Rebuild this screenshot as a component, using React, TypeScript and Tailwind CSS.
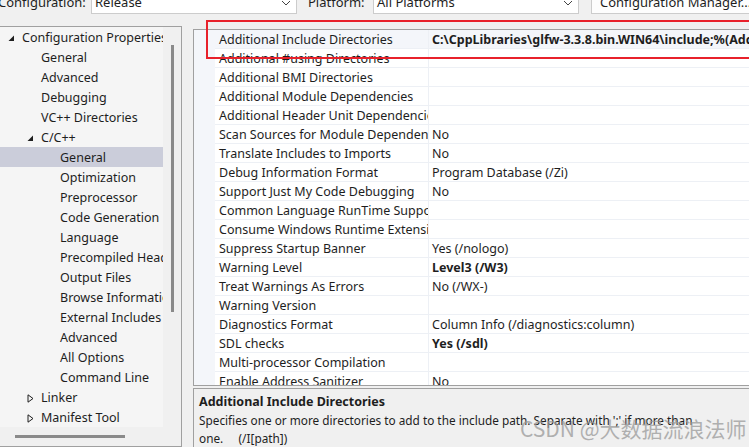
import React from 'react';

const FONT = { fontFamily: '"Noto Sans", "Noto Sans CJK SC", sans-serif' };

type TreeItem = { label: string; level: number; toggle?: 'open' | 'closed'; selected?: boolean };

const tree: TreeItem[] = [
  { label: 'Configuration Properties', level: 0, toggle: 'open' },
  { label: 'General', level: 1 },
  { label: 'Advanced', level: 1 },
  { label: 'Debugging', level: 1 },
  { label: 'VC++ Directories', level: 1 },
  { label: 'C/C++', level: 1, toggle: 'open' },
  { label: 'General', level: 2, selected: true },
  { label: 'Optimization', level: 2 },
  { label: 'Preprocessor', level: 2 },
  { label: 'Code Generation', level: 2 },
  { label: 'Language', level: 2 },
  { label: 'Precompiled Headers', level: 2 },
  { label: 'Output Files', level: 2 },
  { label: 'Browse Information', level: 2 },
  { label: 'External Includes', level: 2 },
  { label: 'Advanced', level: 2 },
  { label: 'All Options', level: 2 },
  { label: 'Command Line', level: 2 },
  { label: 'Linker', level: 1, toggle: 'closed' },
  { label: 'Manifest Tool', level: 1, toggle: 'closed' },
  { label: 'XML Document Generator', level: 1, toggle: 'closed' },
];

type Prop = { name: string; value?: string; bold?: boolean };

const props: Prop[] = [
  { name: 'Additional Include Directories', value: 'C:\\CppLibraries\\glfw-3.3.8.bin.WIN64\\include;%(AdditionalIncludeDirectories)', bold: true },
  { name: 'Additional #using Directories' },
  { name: 'Additional BMI Directories' },
  { name: 'Additional Module Dependencies' },
  { name: 'Additional Header Unit Dependencies' },
  { name: 'Scan Sources for Module Dependencies', value: 'No' },
  { name: 'Translate Includes to Imports', value: 'No' },
  { name: 'Debug Information Format', value: 'Program Database (/Zi)' },
  { name: 'Support Just My Code Debugging', value: 'No' },
  { name: 'Common Language RunTime Support' },
  { name: 'Consume Windows Runtime Extension' },
  { name: 'Suppress Startup Banner', value: 'Yes (/nologo)' },
  { name: 'Warning Level', value: 'Level3 (/W3)', bold: true },
  { name: 'Treat Warnings As Errors', value: 'No (/WX-)' },
  { name: 'Warning Version' },
  { name: 'Diagnostics Format', value: 'Column Info (/diagnostics:column)' },
  { name: 'SDL checks', value: 'Yes (/sdl)', bold: true },
  { name: 'Multi-processor Compilation' },
  { name: 'Enable Address Sanitizer', value: 'No' },
  { name: 'Enable Fuzzer Support', value: 'No' },
];

function Toggle({ kind }: { kind: 'open' | 'closed' }) {
  if (kind === 'open') {
    return (
      <svg width="7" height="7" viewBox="0 0 7 7">
        <polygon points="6,0.5 6,6 0.5,6" fill="#1e1e1e" />
      </svg>
    );
  }
  return (
    <svg width="7" height="9" viewBox="0 0 7 9">
      <polygon points="1,0.8 6,4.5 1,8.2" fill="none" stroke="#1e1e1e" strokeWidth="1" />
    </svg>
  );
}

function Chevron() {
  return (
    <svg width="10" height="6" viewBox="0 0 10 6">
      <polyline points="1,1 5,5 9,1" fill="none" stroke="#444" strokeWidth="1" />
    </svg>
  );
}

export default function App() {
  return (
    <div
      className="relative w-[749px] h-[447px] overflow-hidden bg-[#f0f0f0] text-[12px] text-[#1e1e1e]"
      style={FONT}
    >
      {/* Top bar */}
      <div className="flex items-center h-[22px] mt-[-8px] text-[13px]">
        <span className="ml-[-2px] w-[93px] shrink-0">Configuration:</span>
        <div className="flex items-center justify-between w-[206px] h-[22px] shrink-0 border border-[#cccccc] bg-white pl-[3px] pr-[5px]">
          <span>Release</span>
          <Chevron />
        </div>
        <span className="ml-[11px] w-[65px] shrink-0">Platform:</span>
        <div className="flex items-center justify-between w-[206px] h-[22px] shrink-0 border border-[#cccccc] bg-white pl-[3px] pr-[5px]">
          <span>All Platforms</span>
          <Chevron />
        </div>
        <div className="ml-[12px] h-[22px] w-[170px] shrink-0 border border-[#cccccc] bg-[#fdfdfd] pl-[8px] flex items-center whitespace-nowrap">
          Configuration Manager...
        </div>
      </div>

      <div className="flex mt-[12px]">
        {/* Left tree panel */}
        <div className="w-[182px] h-[421px] shrink-0 border-t border-r border-b border-[#a0a0a0] flex flex-col">
          <div className="flex flex-1 min-h-0">
            <div className="w-[163px] h-[400px] bg-[#f5f5f5] overflow-hidden">
              {tree.map((t, i) => (
                <div
                  key={i}
                  className={`flex items-center h-[20px] pt-[2px] whitespace-nowrap ${t.selected ? 'bg-[#cbcdda]' : ''}`}
                >
                  <div
                    className={`shrink-0 flex items-center justify-end pr-[7px] ${
                      t.level === 0 ? 'w-[22px]' : t.level === 1 ? 'w-[41px]' : 'w-[60px]'
                    }`}
                  >
                    {t.toggle && <Toggle kind={t.toggle} />}
                  </div>
                  <span className="text-[12.5px]">{t.label}</span>
                </div>
              ))}
            </div>
            <div className="flex-1 flex justify-center pt-[18px]">
              <div className="w-[3px] h-[267px] bg-[#8a8a8a] ml-[1px]" />
            </div>
          </div>
          <div className="h-[19px] flex items-center pl-[15px]">
            <div className="w-[110px] h-[3px] bg-[#8a8a8a]" />
          </div>
        </div>

        {/* Right column */}
        <div className="ml-[11px] flex-1 flex flex-col mt-[3px]">
          <div className="h-[357px] border border-r-0 border-[#a0a0a0] flex overflow-hidden">
            <div className="flex-1 min-w-0 overflow-hidden">
              {props.map((p, i) => (
                <div key={i} className="flex h-[19px] shrink-0">
                  <div className="w-[21px] shrink-0 bg-[#f4f6fa]" />
                  <div
                    className={`w-[214px] shrink-0 flex items-center pt-[3px] pl-[4px] overflow-hidden whitespace-nowrap border-b border-r border-[#edf0f5] ${
                      i === 0 ? 'bg-[#f4f6fa]' : 'bg-white'
                    }`}
                  >
                    <span className="text-[12.5px]">{p.name}</span>
                  </div>
                  <div
                    className={`flex-1 min-w-0 flex items-center pt-[3px] pl-[3px] overflow-hidden whitespace-nowrap border-b border-[#edf0f5] ${
                      i === 0 ? 'bg-[#f4f6fa]' : 'bg-white'
                    }`}
                  >
                    <span className={`text-[12.5px] ${p.bold ? 'font-bold' : ''}`}>{p.value ?? ''}</span>
                  </div>
                </div>
              ))}
            </div>
            <div className="w-[9px] shrink-0 bg-[#f0f0f0] border-l border-[#dcdcdc] flex justify-end pr-[1px] pt-[19px]">
              <div className="w-[3px] h-[286px] bg-[#8a8a8a]" />
            </div>
          </div>
          <div className="mt-[2px] flex-1 border-t border-l border-[#a0a0a0] pl-[5px] pt-[4px] leading-[18px]">
            <div className="font-bold text-[12.5px]">Additional Include Directories</div>
            <div className="text-[11.8px] whitespace-nowrap">
              Specifies one or more directories to add to the include path. Separate with ';' if more than
            </div>
            <div className="text-[11.8px] whitespace-pre">one.     (/I[path])</div>
          </div>
        </div>
      </div>

      {/* Red highlight */}
      <div className="absolute left-[206px] top-[20px] w-[560px] h-[39px] border-2 border-[#e8212b] pointer-events-none" />

      {/* Watermark */}
      <div
        className="absolute left-[520px] top-[418px] text-[21px] leading-none text-[#9a9a9a] opacity-75 whitespace-nowrap pointer-events-none"
        style={{ fontFamily: '"Noto Sans CJK SC", "Noto Sans", sans-serif' }}
      >
        CSDN @大数据流浪法师
      </div>
    </div>
  );
}
